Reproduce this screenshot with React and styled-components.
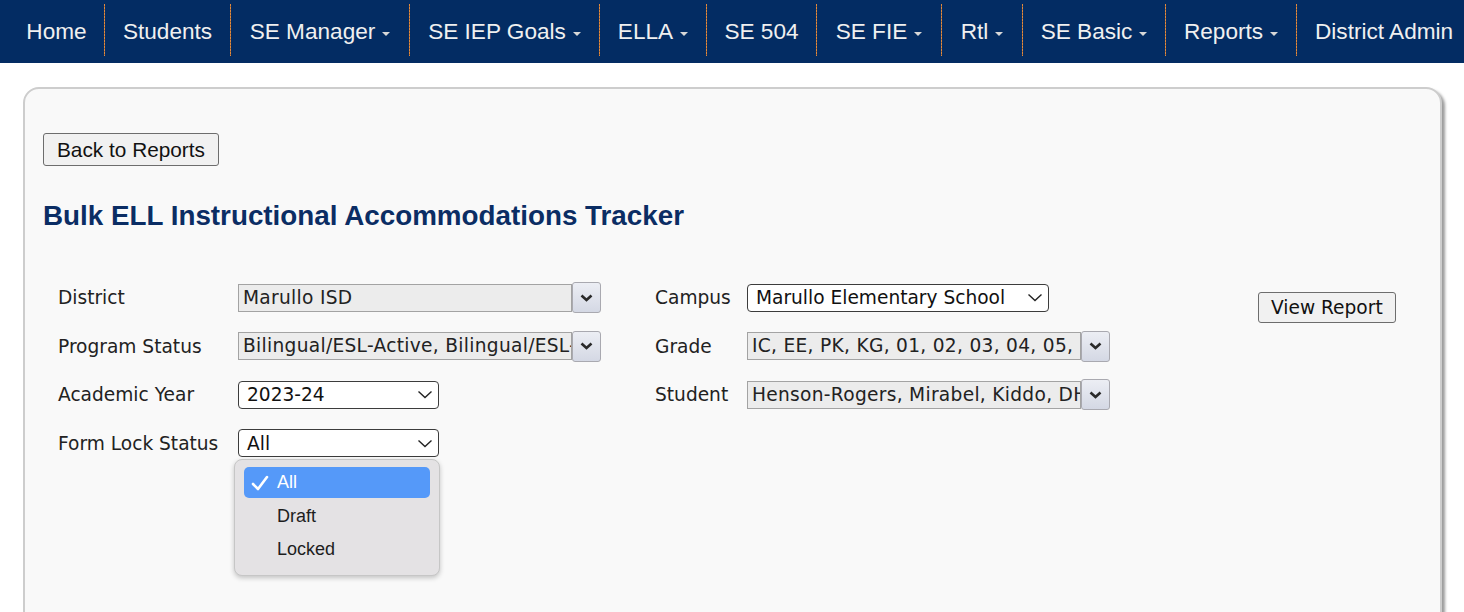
import React from "react";
import styled, { createGlobalStyle } from "styled-components";

const GlobalStyle = createGlobalStyle`
  body {
    margin: 0;
    background: #ffffff;
    font-family: "Liberation Sans", Arial, sans-serif;
  }
`;

const NavBar = styled.nav`
  display: flex;
  align-items: center;
  height: 63px;
  padding-left: 9px;
  background-color: #032c63;
  overflow: hidden;
`;

const NavItem = styled.div`
  display: flex;
  flex: none;
  align-items: center;
  justify-content: center;
  gap: 7px;
  width: ${(p) => (p.width ? `${p.width}px` : "auto")};
  padding: ${(p) => (p.width ? "0" : "0 18px")};
  color: #f0f0f0;
  font-size: 22.6px;
  white-space: nowrap;
`;

const Caret = styled.span`
  width: 0;
  height: 0;
  margin-top: 5px;
  border-left: 4px solid transparent;
  border-right: 4px solid transparent;
  border-top: 4px solid #d8d8d8;
`;

const Separator = styled.span`
  align-self: flex-start;
  flex: none;
  margin-top: 4px;
  width: 1px;
  height: 52px;
  background: repeating-linear-gradient(
    to bottom,
    #e0893d 0,
    #e0893d 2px,
    #9c6238 2px,
    #9c6238 3px
  );
`;

const Panel = styled.div`
  margin: 24px 22px 0 23px;
  min-height: 560px;
  padding: 44px 18px 0;
  background-color: #f9f9f9;
  border: 2px solid #cdcdcd;
  border-radius: 16px;
  box-shadow: 3px 3px 3px #9c9c9c;
`;

const BackButton = styled.button`
  height: 33px;
  padding: 0 13px;
  font-family: "Liberation Sans", Arial, sans-serif;
  font-size: 20.8px;
  color: #111;
  background-color: #f1f1f1;
  border: 1px solid #6d6d6d;
  border-radius: 3px;
`;

const Title = styled.h1`
  margin: 34px 0 0;
  line-height: 32px;
  font-size: 27.8px;
  font-weight: bold;
  color: #0b2d64;
`;

const Form = styled.div`
  display: flex;
  align-items: flex-start;
  margin-top: 50px;
  padding-left: 15px;
`;

const FieldGrid = styled.div`
  display: grid;
  grid-template-columns: ${(p) => p.labelWidth}px 363px;
  grid-auto-rows: 31px;
  row-gap: 17.5px;
  align-items: center;
  margin-right: ${(p) => p.gapRight}px;
`;

const Label = styled.span`
  font-family: "DejaVu Sans", Verdana, sans-serif;
  font-size: 18.6px;
  color: #222;
  white-space: nowrap;
`;

const Control = styled.div`
  position: relative;
  display: flex;
  align-items: center;
`;

const MultiBox = styled.div`
  width: ${(p) => p.width}px;
  height: 28px;
  box-sizing: border-box;
  padding: 0 4px;
  line-height: 26px;
  font-family: "DejaVu Sans", Verdana, sans-serif;
  font-size: 18.6px;
  letter-spacing: 0.3px;
  color: #222;
  background-color: #ececec;
  border: 1px solid #a3a3a3;
  white-space: nowrap;
  overflow: hidden;
`;

const MultiButton = styled.div`
  display: flex;
  align-items: center;
  justify-content: center;
  width: 29px;
  height: 31px;
  box-sizing: border-box;
  background: linear-gradient(#eceef4, #d4d8e4);
  border: 1px solid #a9a9b0;
  border-radius: 3px;
`;

const Select = styled.div`
  display: flex;
  align-items: center;
  justify-content: space-between;
  width: ${(p) => p.width}px;
  height: 28px;
  box-sizing: border-box;
  padding: 0 5px 0 8px;
  font-family: "DejaVu Sans", Verdana, sans-serif;
  font-size: 18.6px;
  color: #111;
  background-color: #ffffff;
  border: 1px solid #3c3c3c;
  border-radius: 4px;
  white-space: nowrap;
`;

const ViewButton = styled.button`
  margin-top: 10px;
  height: 31px;
  padding: 0 12px;
  font-family: "DejaVu Sans", Verdana, sans-serif;
  font-size: 18.6px;
  color: #111;
  background-color: #f1f1f1;
  border: 1px solid #6d6d6d;
  border-radius: 3px;
`;

const Menu = styled.div`
  position: absolute;
  top: 30px;
  left: -4px;
  width: 206px;
  box-sizing: border-box;
  padding: 7px 9px 9px;
  background-color: #e4e2e4;
  border: 1px solid #c6c6c6;
  border-radius: 8px;
  box-shadow: 0 2px 5px rgba(0, 0, 0, 0.22);
  z-index: 2;
`;

const MenuItem = styled.div`
  display: flex;
  align-items: center;
  height: ${(p) => (p.selected ? 31 : 33)}px;
  margin-bottom: ${(p) => (p.selected ? 2 : 0)}px;
  padding-left: 33px;
  position: relative;
  font-family: "Liberation Sans", Arial, sans-serif;
  font-size: 18px;
  color: ${(p) => (p.selected ? "#ffffff" : "#1d1d1d")};
  background-color: ${(p) => (p.selected ? "#5599f9" : "transparent")};
  border-radius: 5px;
`;

const Check = styled.svg`
  position: absolute;
  left: 7px;
  top: 8px;
`;

const Chevron = () => (
  <svg width="13" height="8" viewBox="0 0 13 8">
    <path d="M1.5 1.5 L6.5 6 L11.5 1.5" fill="none" stroke="#2a2a2a" strokeWidth="2.6" />
  </svg>
);

const ThinChevron = () => (
  <svg width="16" height="9" viewBox="0 0 16 9">
    <path d="M1.5 1.5 L8 7.5 L14.5 1.5" fill="none" stroke="#222" strokeWidth="1.4" />
  </svg>
);

// name, has dropdown caret, cell width
const navItems = [
  ["Home", false, 95],
  ["Students", false, 125],
  ["SE Manager", true, 178],
  ["SE IEP Goals", true, 189],
  ["ELLA", true, 106],
  ["SE 504", false, 109],
  ["SE FIE", true, 124],
  ["Rtl", true, 80],
  ["SE Basic", true, 142],
  ["Reports", true, 130],
  ["District Admin", false, 0],
];

function MultiSelect({ value, width }) {
  return (
    <Control>
      <MultiBox width={width}>{value}</MultiBox>
      <MultiButton>
        <Chevron />
      </MultiButton>
    </Control>
  );
}

export default function App() {
  return (
    <>
      <GlobalStyle />
      <NavBar>
        {navItems.map(([name, caret, width], i) => (
          <React.Fragment key={name}>
            {i > 0 && <Separator />}
            <NavItem width={width}>
              {name}
              {caret && <Caret />}
            </NavItem>
          </React.Fragment>
        ))}
      </NavBar>

      <Panel>
        <BackButton>Back to Reports</BackButton>
        <Title>Bulk ELL Instructional Accommodations Tracker</Title>

        <Form>
          <FieldGrid labelWidth={180} gapRight={54}>
            <Label>District</Label>
            <MultiSelect width={334} value="Marullo ISD" />

            <Label>Program Status</Label>
            <MultiSelect width={334} value="Bilingual/ESL-Active, Bilingual/ESL-Exited" />

            <Label>Academic Year</Label>
            <Control>
              <Select width={201}>
                2023-24
                <ThinChevron />
              </Select>
            </Control>

            <Label>Form Lock Status</Label>
            <Control>
              <Select width={201}>
                All
                <ThinChevron />
              </Select>
              <Menu>
                <MenuItem selected>
                  <Check width="18" height="16" viewBox="0 0 18 16">
                    <path d="M2 9 L7 14 L16 2" fill="none" stroke="#ffffff" strokeWidth="2.6" strokeLinecap="round" strokeLinejoin="round" />
                  </Check>
                  All
                </MenuItem>
                <MenuItem>Draft</MenuItem>
                <MenuItem>Locked</MenuItem>
              </Menu>
            </Control>
          </FieldGrid>

          <FieldGrid labelWidth={92} gapRight={148}>
            <Label>Campus</Label>
            <Control>
              <Select width={302}>
                Marullo Elementary School
                <ThinChevron />
              </Select>
            </Control>

            <Label>Grade</Label>
            <MultiSelect width={335} value="IC, EE, PK, KG, 01, 02, 03, 04, 05, 06, 07" />

            <Label>Student</Label>
            <MultiSelect width={335} value="Henson-Rogers, Mirabel, Kiddo, DHS" />
          </FieldGrid>

          <ViewButton>View Report</ViewButton>
        </Form>
      </Panel>
    </>
  );
}
